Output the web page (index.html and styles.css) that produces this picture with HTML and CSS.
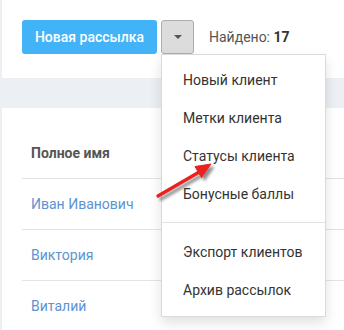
FILE: index.html
```html
<!DOCTYPE html>
<html lang="ru">
<head>
  <meta charset="UTF-8">
  <title>Клиенты</title>
  <meta name="viewport" content="width=device-width, initial-scale=1.0">
  <link rel="stylesheet" href="styles.css">
</head>
<body>
  <div class="toolbar">
    <button class="btn-primary">Новая рассылка</button>
    <div class="dropdown">
      <button class="btn-toggle"><span class="caret"></span></button>
      <ul class="dropdown-menu">
        <li>Новый клиент</li>
        <li>Метки клиента</li>
        <li>Статусы клиента</li>
        <li>Бонусные баллы</li>
        <li class="divider"></li>
        <li>Экспорт клиентов</li>
        <li>Архив рассылок</li>
      </ul>
    </div>
    <span class="found">Найдено: <b>17</b></span>
  </div>

  <div class="card">
    <table class="clients">
      <thead>
        <tr><th>Полное имя</th></tr>
      </thead>
      <tbody>
        <tr><td><a href="#">Иван Иванович</a></td></tr>
        <tr><td><a href="#">Виктория</a></td></tr>
        <tr><td><a href="#">Виталий</a></td></tr>
      </tbody>
    </table>
  </div>

  <!-- стрелка-указатель -->
  <svg class="arrow" width="80" height="60" viewBox="0 0 80 60">
    <defs>
      <filter id="shadow" x="-30%" y="-30%" width="160%" height="160%">
        <feDropShadow dx="3" dy="3" stdDeviation="1.6" flood-color="#000" flood-opacity="0.45"/>
      </filter>
    </defs>
    <g filter="url(#shadow)" fill="#e8221e" stroke="#e8221e">
      <line x1="8" y1="46" x2="51" y2="21" stroke-width="3.4" stroke-linecap="round"/>
      <polygon points="61,14 51.5,27.5 45,16.5" stroke-width="1" stroke-linejoin="round"/>
    </g>
  </svg>
</body>
</html>
```

FILE: styles.css
```css
body {
  margin: 0;
  padding-left: 2px;
  background: #eceff4;
  font-family: Roboto, "Liberation Sans", Arial, sans-serif;
  font-size: 14px;
  color: #333;
  height: 330px;
  overflow: hidden;
}

.toolbar {
  background: #fff;
  height: 78px;
  box-sizing: border-box;
  padding: 20px 0 0 20px;
  display: flex;
  align-items: flex-start;
}

.btn-primary {
  height: 34px;
  width: 135px;
  border: none;
  border-radius: 3px;
  background: #43b3f7;
  color: #fff;
  font-family: inherit;
  font-size: 14px;
  font-weight: 500;
  padding: 0;
}

.dropdown {
  position: relative;
  margin-left: 4px;
}

.btn-toggle {
  width: 33px;
  height: 34px;
  border: 1px solid #adadad;
  border-radius: 3px;
  background: #dcdcdc;
  padding: 0;
  display: flex;
  align-items: center;
  justify-content: center;
}

.caret {
  width: 0;
  height: 0;
  border-top: 4px solid #555;
  border-left: 4px solid transparent;
  border-right: 4px solid transparent;
}

.dropdown-menu {
  position: absolute;
  top: 34px;
  left: 0;
  width: 165px;
  box-sizing: border-box;
  margin: 0;
  padding: 6px 0 7px;
  list-style: none;
  background: #fff;
  border: 1px solid #dadada;
  box-shadow: 0 6px 12px rgba(0, 0, 0, 0.12);
  z-index: 5;
}

.dropdown-menu li {
  height: 38px;
  line-height: 38px;
  padding-left: 21px;
  white-space: nowrap;
}

.dropdown-menu .divider {
  height: 1px;
  margin: 9px 0 10px;
  padding: 0;
  background: #e2e2e2;
}

.found {
  margin-left: 15px;
  line-height: 34px;
  color: #555;
}

.found b {
  color: #333;
}

.card {
  background: #fff;
  margin-top: 30px;
  padding: 20px 0 0 20px;
  height: 222px;
  box-sizing: border-box;
  overflow: hidden;
}

.clients {
  width: 100%;
  border-collapse: collapse;
}

.clients th,
.clients td {
  height: 50px;
  padding: 0 0 0 9px;
  text-align: left;
  border-bottom: 1px solid #e3e3e3;
}

.clients th {
  color: #555;
  font-weight: bold;
}

.clients a {
  color: #5b93d3;
  text-decoration: none;
}

.arrow {
  position: absolute;
  left: 150px;
  top: 150px;
  z-index: 10;
}
```
